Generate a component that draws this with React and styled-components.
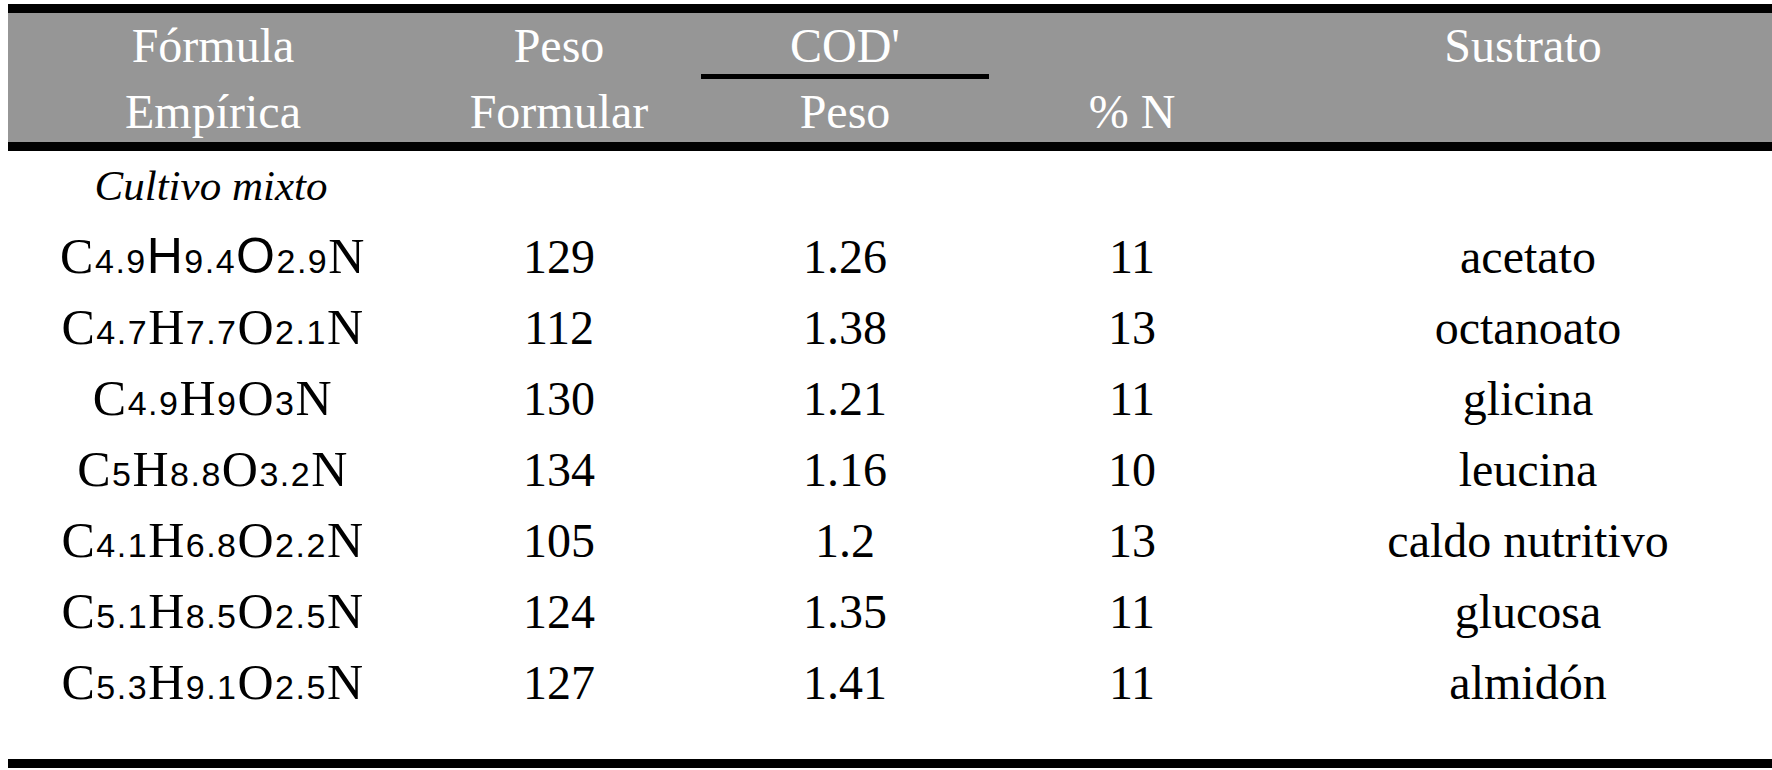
import React from "react";
import styled, { createGlobalStyle } from "styled-components";

const SERIF = `"Liberation Serif", "Times New Roman", "DejaVu Serif", serif`;
const SANS = `"Liberation Sans", Arial, sans-serif`;

const GlobalStyle = createGlobalStyle`
  html, body {
    margin: 0;
    padding: 0;
    background: #ffffff;
  }
  body {
    font-family: ${SERIF};
    color: #000000;
    overflow: hidden;
  }
`;

const COLUMNS = "410px 282px 290px 284px 1fr";

const Page = styled.div`
  padding: 4px 0 0 8px;
  width: 1772px;
  box-sizing: border-box;
  font-family: ${SERIF};
`;

const HeaderBand = styled.div`
  display: grid;
  grid-template-columns: ${COLUMNS};
  grid-template-rows: 66px 63px;
  background: #969696;
  border-top: 9px solid #000;
  border-bottom: 9px solid #000;
  color: #ffffff;
  font-size: 48px;
`;

const HeadCell = styled.div`
  grid-column: ${(p) => p.$col};
  grid-row: ${(p) => p.$row};
  text-align: center;
  line-height: 66px;
  white-space: nowrap;
  box-sizing: border-box;
  ${(p) => (p.$rule ? "border-bottom: 5px solid #000; margin: 0 1px;" : "")}
`;

const Body = styled.div`
  display: grid;
  grid-template-columns: ${COLUMNS};
  font-size: 48px;
`;

const GroupLabel = styled.div`
  grid-column: 1;
  grid-row: 1;
  height: 70px;
  line-height: 70px;
  font-size: 43px;
  font-style: italic;
  text-align: center;
  padding-right: 4px;
`;

const Cell = styled.div`
  height: 71px;
  line-height: 71px;
  text-align: center;
  white-space: nowrap;
  padding-left: ${(p) => (p.$shift ? p.$shift : 0)}px;
`;

const Element = styled.span`
  font-family: ${(p) => (p.$sans ? SANS : SERIF)};
  font-size: 50px;
  line-height: 1;
  letter-spacing: 1.5px;
`;

const Sub = styled.span`
  font-family: ${SANS};
  font-size: 34px;
  line-height: 1;
  letter-spacing: 1.5px;
`;

const BottomRule = styled.div`
  height: 9px;
  background: #000;
  margin-top: 41px;
`;

const rows = [
  { f: ["C", "4.9", "H", "9.4", "O", "2.9", "N"], sans: true, peso: "129", cod: "1.26", n: "11", sustrato: "acetato" },
  { f: ["C", "4.7", "H", "7.7", "O", "2.1", "N"], peso: "112", cod: "1.38", n: "13", sustrato: "octanoato" },
  { f: ["C", "4.9", "H", "9", "O", "3", "N"], peso: "130", cod: "1.21", n: "11", sustrato: "glicina" },
  { f: ["C", "5", "H", "8.8", "O", "3.2", "N"], peso: "134", cod: "1.16", n: "10", sustrato: "leucina" },
  { f: ["C", "4.1", "H", "6.8", "O", "2.2", "N"], peso: "105", cod: "1.2", n: "13", sustrato: "caldo nutritivo" },
  { f: ["C", "5.1", "H", "8.5", "O", "2.5", "N"], peso: "124", cod: "1.35", n: "11", sustrato: "glucosa" },
  { f: ["C", "5.3", "H", "9.1", "O", "2.5", "N"], peso: "127", cod: "1.41", n: "11", sustrato: "almidón" },
];

const Formula = ({ parts, sans }) => (
  <>
    {parts.map((part, i) =>
      i % 2 === 1 ? (
        <Sub key={i}>{part}</Sub>
      ) : (
        <Element key={i} $sans={sans && (part === "H" || part === "O")}>
          {part}
        </Element>
      )
    )}
  </>
);

export default function App() {
  return (
    <Page>
      <GlobalStyle />
      <HeaderBand>
        <HeadCell $row={1} $col={1}>Fórmula</HeadCell>
        <HeadCell $row={1} $col={2}>Peso</HeadCell>
        <HeadCell $row={1} $col={3} $rule>COD'</HeadCell>
        <HeadCell $row={1} $col={5}>Sustrato</HeadCell>
        <HeadCell $row={2} $col={1}>Empírica</HeadCell>
        <HeadCell $row={2} $col={2}>Formular</HeadCell>
        <HeadCell $row={2} $col={3}>Peso</HeadCell>
        <HeadCell $row={2} $col={4}>% N</HeadCell>
      </HeaderBand>
      <Body>
        <GroupLabel>Cultivo mixto</GroupLabel>
        {rows.map((r, i) => (
          <React.Fragment key={i}>
            <Cell style={{ gridRow: i + 2 }}>
              <Formula parts={r.f} sans={r.sans} />
            </Cell>
            <Cell style={{ gridRow: i + 2 }}>{r.peso}</Cell>
            <Cell style={{ gridRow: i + 2 }}>{r.cod}</Cell>
            <Cell style={{ gridRow: i + 2 }}>{r.n}</Cell>
            <Cell style={{ gridRow: i + 2 }} $shift={10}>{r.sustrato}</Cell>
          </React.Fragment>
        ))}
      </Body>
      <BottomRule />
    </Page>
  );
}
